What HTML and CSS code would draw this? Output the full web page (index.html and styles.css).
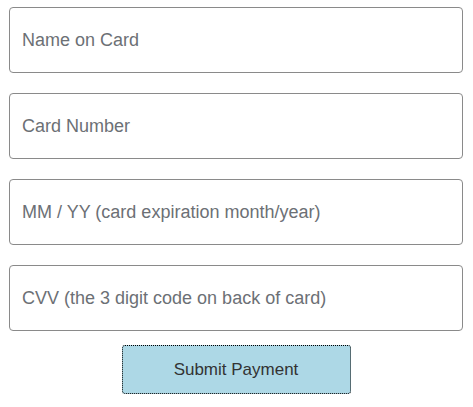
FILE: index.html
```html
<!DOCTYPE html>
<html>
<head>
<meta charset="utf-8">
<link rel="stylesheet" href="styles.css">
</head>
<body>
<form class="pay-form">
  <input class="field" type="text" placeholder="Name on Card">
  <input class="field" type="text" placeholder="Card Number">
  <input class="field" type="text" placeholder="MM / YY (card expiration month/year)">
  <input class="field" type="text" placeholder="CVV (the 3 digit code on back of card)">
  <button class="submit" type="button">Submit Payment</button>
</form>
</body>
</html>
```
FILE: styles.css
```css
html, body {
  margin: 0;
  padding: 0;
  background: #fff;
}
body {
  padding: 7px 10px 0 9px;
  font-family: "Liberation Sans", Arial, sans-serif;
}
.pay-form {
  display: flex;
  flex-direction: column;
  align-items: center;
  gap: 20px;
}
.field {
  box-sizing: border-box;
  width: 100%;
  height: 66px;
  margin: 0;
  padding: 0 12px;
  border: 1px solid #8a8a8a;
  border-radius: 4px;
  font-family: "Liberation Sans", Arial, sans-serif;
  font-size: 18px;
  color: #333;
  outline: none;
}
.field::placeholder {
  color: #6c7075;
  opacity: 1;
}
.submit {
  box-sizing: border-box;
  width: 229px;
  height: 49px;
  margin-top: -6px;
  background: #add8e6;
  border: 1px dotted #000;
  border-radius: 3px;
  font-family: "Liberation Sans", Arial, sans-serif;
  font-size: 17px;
  color: #333;
  cursor: pointer;
}
```
